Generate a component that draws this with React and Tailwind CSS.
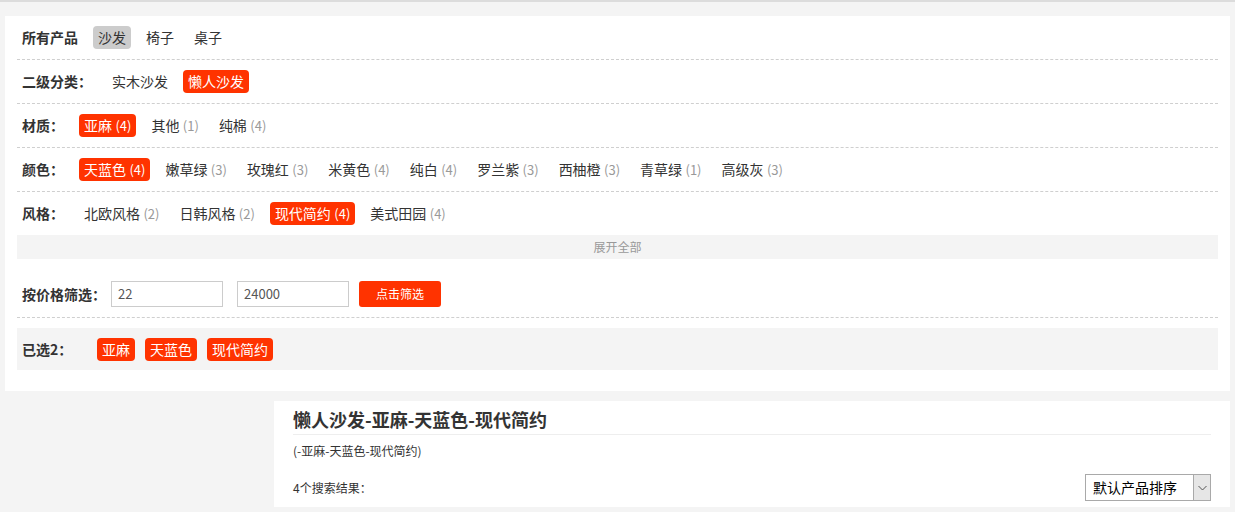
import React from "react";

const FONT = "font-['Noto_Sans_CJK_SC','Noto_Sans',sans-serif]";

function Item({ label, count, active, gray }) {
  const base = "ml-[10px] h-[23px] leading-[23px] px-[5px] rounded-[4px] text-[14px] whitespace-nowrap";
  let cls = base + " text-[#333]";
  if (active) cls = base + " bg-[#ff3300] text-white";
  if (gray) cls = base + " bg-[#cccccc] text-[#333]";
  return (
    <span className={cls}>
      {label}
      {count !== undefined && (
        <span className={active ? "text-[13px] text-white ml-[0.5px]" : "text-[13px] text-[#999] ml-[0.5px]"}> ({count})</span>
      )}
    </span>
  );
}

function Row({ label, children }) {
  return (
    <div className="flex items-center h-[44px] pl-[5px] border-b border-dashed border-[#cfcfcf]">
      <span className="font-bold text-[14px] text-[#333] mr-[5px] whitespace-nowrap">{label}</span>
      {children}
    </div>
  );
}

export default function App() {
  const colors = [
    ["天蓝色", 4, true],
    ["嫩草绿", 3],
    ["玫瑰红", 3],
    ["米黄色", 4],
    ["纯白", 4],
    ["罗兰紫", 3],
    ["西柚橙", 3],
    ["青草绿", 1],
    ["高级灰", 3],
  ];
  return (
    <div className={`min-h-[512px] bg-[#f4f4f4] border-t-2 border-[#dcdcdc] text-[#333] ${FONT}`}>
      <div className="pt-[14px] px-[5px]">
        <div className="bg-white px-[12px] pb-[21px]">
          <Row label="所有产品">
            <Item label="沙发" gray />
            <Item label="椅子" />
            <Item label="桌子" />
          </Row>
          <Row label="二级分类：">
            <Item label="实木沙发" />
            <Item label="懒人沙发" active />
          </Row>
          <Row label="材质：">
            <Item label="亚麻" count={4} active />
            <Item label="其他" count={1} />
            <Item label="纯棉" count={4} />
          </Row>
          <Row label="颜色：">
            {colors.map(([l, c, a]) => (
              <Item key={l} label={l} count={c} active={a} />
            ))}
          </Row>
          <div className="flex items-center h-[43px] pl-[5px]">
            <span className="font-bold text-[14px] mr-[5px]">风格：</span>
            <Item label="北欧风格" count={2} />
            <Item label="日韩风格" count={2} />
            <Item label="现代简约" count={4} active />
            <Item label="美式田园" count={4} />
          </div>
          <div className="h-[24px] bg-[#f4f4f4] flex items-center justify-center text-[12px] text-[#999]">
            展开全部
          </div>
          <div className="flex items-center h-[59px] pt-[12px] pl-[5px] border-b border-dashed border-[#cfcfcf]">
            <span className="font-bold text-[14px] mr-[5px]">按价格筛选：</span>
            <div className="w-[112px] h-[26px] border border-[#cccccc] flex items-center pl-[6px] text-[13px] text-[#555]">22</div>
            <div className="ml-[14px] w-[112px] h-[26px] border border-[#cccccc] flex items-center pl-[6px] text-[13px] text-[#555]">24000</div>
            <div className="ml-[10px] w-[82px] h-[26px] rounded-[3px] bg-[#ff3300] text-white text-[12px] flex items-center justify-center">点击筛选</div>
          </div>
          <div className="mt-[10px] h-[42px] bg-[#f4f4f4] flex items-center pl-[5px]">
            <span className="font-bold text-[14px] w-[75px]">已选2：</span>
            <span className="h-[23px] leading-[23px] px-[5px] rounded-[4px] bg-[#ff3300] text-white text-[14px] mr-[10px]">亚麻</span>
            <span className="h-[23px] leading-[23px] px-[5px] rounded-[4px] bg-[#ff3300] text-white text-[14px] mr-[10px]">天蓝色</span>
            <span className="h-[23px] leading-[23px] px-[5px] rounded-[4px] bg-[#ff3300] text-white text-[14px] mr-[10px]">现代简约</span>
          </div>
        </div>
      </div>
      <div className="mt-[10px] ml-[274px] mr-[5px] bg-white px-[19px] pb-[6px]">
        <div className="pt-[2px] h-[34px] leading-[32px] text-[18px] font-bold text-[#333] border-b border-[#eeeeee]">
          懒人沙发-亚麻-天蓝色-现代简约
        </div>
        <div className="mt-[6px] h-[20px] leading-[20px] text-[12px] text-[#333]">(-亚麻-天蓝色-现代简约)</div>
        <div className="mt-[13px] flex items-center justify-between">
          <span className="text-[12px] text-[#333]">4个搜索结果：</span>
          <div className="w-[126px] h-[27px] border border-[#a9a9a9] flex items-stretch">
            <div className="flex-1 flex items-center pl-[7px] text-[14px] text-black">默认产品排序</div>
            <div className="w-[17px] bg-[#e6e6e6] border-l border-[#a9a9a9] flex items-center justify-center">
              <svg width="9" height="6" viewBox="0 0 9 6">
                <path d="M0.5 1 L4.5 5 L8.5 1" fill="none" stroke="#555" strokeWidth="1" />
              </svg>
            </div>
          </div>
        </div>
      </div>
    </div>
  );
}
